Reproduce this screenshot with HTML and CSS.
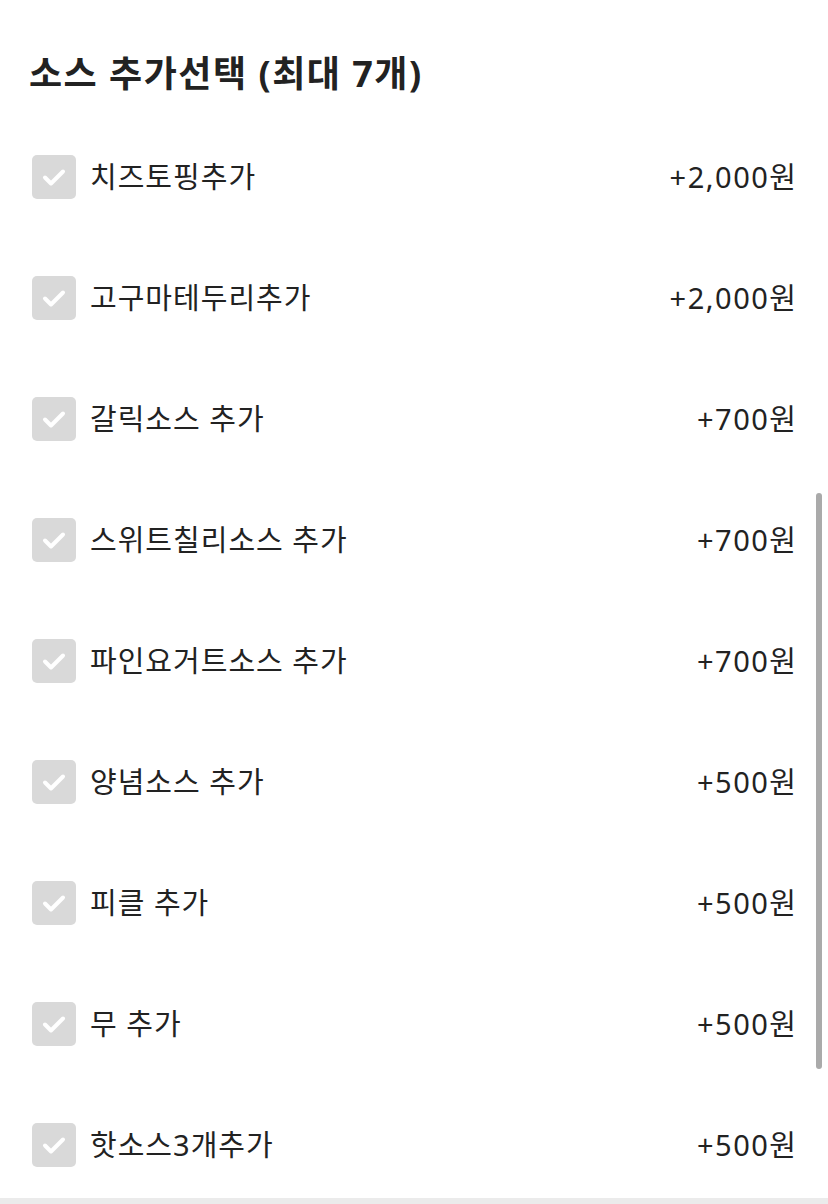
FILE: index.html
```html
<!DOCTYPE html>
<html>
	<head>
		<meta charset="UTF-8">
		<title>소스 추가선택</title>
		<link rel="stylesheet" href="styles.css">
	</head>
	<body>
		<div class="section">
			<h2 class="title">소스 추가선택 (최대 7개)</h2>
			<ul class="options">
				<li class="option">
					<span class="check"><svg viewBox="0 0 44 44"><path d="M13 22.5l6 6L31 16.5"/></svg></span>
					<span class="name">치즈토핑추가</span>
					<span class="price">+2,000원</span>
				</li>
				<li class="option">
					<span class="check"><svg viewBox="0 0 44 44"><path d="M13 22.5l6 6L31 16.5"/></svg></span>
					<span class="name">고구마테두리추가</span>
					<span class="price">+2,000원</span>
				</li>
				<li class="option">
					<span class="check"><svg viewBox="0 0 44 44"><path d="M13 22.5l6 6L31 16.5"/></svg></span>
					<span class="name">갈릭소스 추가</span>
					<span class="price">+700원</span>
				</li>
				<li class="option">
					<span class="check"><svg viewBox="0 0 44 44"><path d="M13 22.5l6 6L31 16.5"/></svg></span>
					<span class="name">스위트칠리소스 추가</span>
					<span class="price">+700원</span>
				</li>
				<li class="option">
					<span class="check"><svg viewBox="0 0 44 44"><path d="M13 22.5l6 6L31 16.5"/></svg></span>
					<span class="name">파인요거트소스 추가</span>
					<span class="price">+700원</span>
				</li>
				<li class="option">
					<span class="check"><svg viewBox="0 0 44 44"><path d="M13 22.5l6 6L31 16.5"/></svg></span>
					<span class="name">양념소스 추가</span>
					<span class="price">+500원</span>
				</li>
				<li class="option">
					<span class="check"><svg viewBox="0 0 44 44"><path d="M13 22.5l6 6L31 16.5"/></svg></span>
					<span class="name">피클 추가</span>
					<span class="price">+500원</span>
				</li>
				<li class="option">
					<span class="check"><svg viewBox="0 0 44 44"><path d="M13 22.5l6 6L31 16.5"/></svg></span>
					<span class="name">무 추가</span>
					<span class="price">+500원</span>
				</li>
				<li class="option">
					<span class="check"><svg viewBox="0 0 44 44"><path d="M13 22.5l6 6L31 16.5"/></svg></span>
					<span class="name">핫소스3개추가</span>
					<span class="price">+500원</span>
				</li>
			</ul>
		</div>
		<div class="divider"></div>
		<div class="scrollbar"></div>
	</body>
</html>
```

FILE: styles.css
```css
*{
	margin: 0;
	padding: 0;
	box-sizing: border-box;
}
body{
	background: #fff;
	color: #222;
	font-family: "Noto Sans", "Noto Sans CJK KR", sans-serif;
	overflow: hidden;
}
.section{
	padding: 0 32px 0 32px;
}
.title{
	height: 116px;
	padding-top: 48px;
	margin-left: -3px;
	font-size: 36px;
	line-height: 52px;
	font-weight: 700;
	color: #222;
	letter-spacing: 1.5px;
}
.options{
	list-style: none;
}
.option{
	height: 121px;
	padding-top: 39px;
	display: flex;
	align-items: flex-start;
}
.option:last-child{
	height: 114px;
}
.check{
	width: 44px;
	height: 44px;
	border-radius: 5px;
	background: #d9d9d9;
	flex: none;
	display: flex;
}
.check svg{
	width: 44px;
	height: 44px;
	fill: none;
	stroke: #fff;
	stroke-width: 4;
	stroke-linecap: round;
	stroke-linejoin: round;
}
.name{
	flex: 1;
	margin-left: 14px;
	font-size: 29px;
	line-height: 44px;
	letter-spacing: 1px;
	color: #222;
}
.price{
	font-size: 29px;
	line-height: 44px;
	color: #222;
	letter-spacing: 1.5px;
	margin-right: -1.5px;
}
.divider{
	height: 8px;
	background: #ebebeb;
}
.scrollbar{
	position: absolute;
	right: 6px;
	top: 493px;
	width: 6px;
	height: 576px;
	border-radius: 3px;
	background: #aaa;
}
```
